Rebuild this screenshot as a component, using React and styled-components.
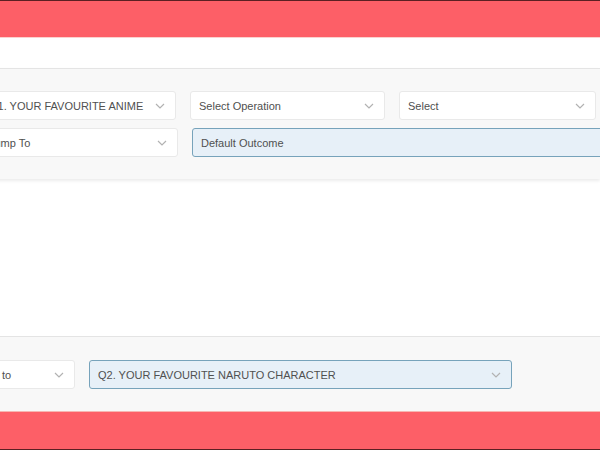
import React from "react";
import styled, { createGlobalStyle } from "styled-components";

const Global = createGlobalStyle`
  html, body { margin: 0; padding: 0; width: 600px; height: 450px; overflow: hidden; background: #ffffff; }
  body { font-family: "Liberation Sans", Arial, sans-serif; }
  * { box-sizing: border-box; }
`;

const Page = styled.div`
  width: 600px;
  height: 450px;
  display: flex;
  flex-direction: column;
  overflow: hidden;
  background: #fff;
`;

const Band = styled.div`
  height: ${(p) => (p.$bottom ? 39 : 38)}px;
  flex: none;
  background: #fd5f67;
  ${(p) =>
    p.$bottom
      ? `border-bottom: 1px solid #5c1f22; border-top: 1px solid #f6b7b2;`
      : `border-top: 1px solid #5c1f22; border-bottom: 1px solid #fbd2cf;`}
`;

const Spacer = styled.div`
  flex: ${(p) => (p.$grow ? "1" : "none")};
  height: ${(p) => (p.$h ? `${p.$h}px` : "auto")};
  background: #fff;
`;

const Panel = styled.div`
  flex: none;
  background: #f8f8f8;
  border-top: 1px solid #e4e4e4;
  padding: ${(p) => (p.$compact ? "23px 0 22px" : "22px 0 22px")};
  margin-left: ${(p) => p.$shift}px;
  width: calc(100% - ${(p) => p.$shift}px);
  display: flex;
  flex-direction: column;
  gap: 8px;
  box-shadow: ${(p) => (p.$shadow ? "0 2px 3px rgba(0,0,0,0.08)" : "none")};
  position: relative;
  z-index: 1;
`;

const Row = styled.div`
  display: grid;
  grid-template-columns: ${(p) => p.$cols};
  column-gap: ${(p) => p.$gap}px;
`;

const SelectBox = styled.div`
  height: 29px;
  display: flex;
  align-items: center;
  justify-content: space-between;
  padding: 0 10px 0 8px;
  border-radius: 3px;
  border: 1px solid ${(p) => (p.$active ? "#77a3bb" : "#e9e9e9")};
  background: ${(p) => (p.$active ? "#e7f0f8" : "#ffffff")};
  color: #505050;
  font-size: 11px;
  white-space: nowrap;
  overflow: hidden;
  min-width: 0;
`;

const Label = styled.span`
  overflow: hidden;
  flex: 1;
  min-width: 0;
`;

const Chevron = () => (
  <svg width="10" height="6" viewBox="0 0 10 6" style={{ flex: "none", marginLeft: 8 }}>
    <path d="M1 1 L5 5 L9 1" fill="none" stroke="#b2b2b2" strokeWidth="1.2" />
  </svg>
);

const Select = ({ children, active }) => (
  <SelectBox $active={active}>
    <Label>{children}</Label>
    <Chevron />
  </SelectBox>
);

export default function App() {
  return (
    <Page>
      <Global />
      <Band />
      <Spacer $h={30} />
      <Panel $shift={-20} $shadow>
        <Row $cols="196px 195px 197px" $gap={14}>
          <Select>Q1. YOUR FAVOURITE ANIME</Select>
          <Select>Select Operation</Select>
          <Select>Select</Select>
        </Row>
        <Row $cols="198px 440px" $gap={14}>
          <Select>Jump To</Select>
          <Select active>Default Outcome</Select>
        </Row>
      </Panel>
      <Spacer $grow />
      <Panel $shift={-37} $compact>
        <Row $cols="112px 423px" $gap={14}>
          <Select>Jump to</Select>
          <Select active>Q2. YOUR FAVOURITE NARUTO CHARACTER</Select>
        </Row>
      </Panel>
      <Band $bottom />
    </Page>
  );
}
